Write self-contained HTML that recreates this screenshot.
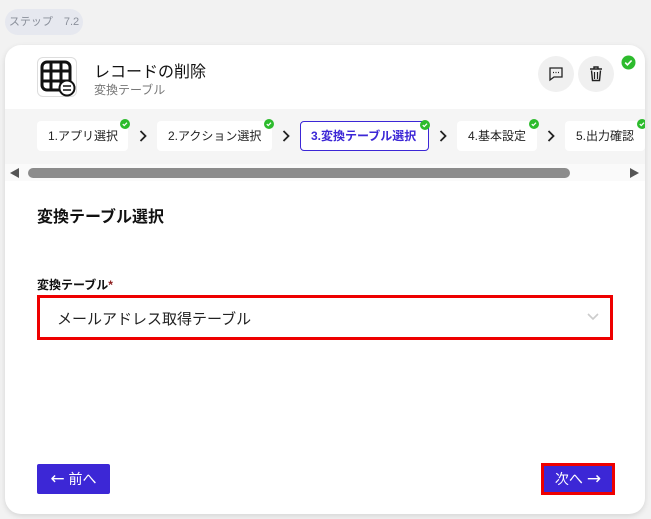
<!DOCTYPE html>
<html><head><meta charset="utf-8"><style>
*{box-sizing:border-box;margin:0;padding:0}
body{width:651px;height:519px;background:#f2f2f2;font-family:"Liberation Sans","Noto Sans CJK JP",sans-serif;position:relative;overflow:hidden;color:#111}
.abs{position:absolute}
.badge{left:5px;top:9px;width:78px;height:26px;border-radius:13px;background:#e6e8ef;color:#8a8f9a;font-size:11px;line-height:26px;text-align:center}
.card{left:5px;top:45px;width:640px;height:469px;background:#fff;border-radius:16px;box-shadow:0 2px 6px rgba(0,0,0,.12);overflow:hidden}
.circ{width:36px;height:36px;border-radius:50%;background:#f0f0f0;display:flex;align-items:center;justify-content:center}
.steps{left:0;top:64px;width:640px;height:55px;background:#f5f5f5}
.step{position:absolute;top:12px;height:30px;background:#fff;border-radius:4px;font-size:12px;line-height:30px;padding-left:11px;color:#222}
.step .ck{position:absolute;right:-2px;top:-2px}
.chev{position:absolute;top:21px}
.btn{background:#3c27d6;color:#fff;font-size:14px;text-align:center;border-radius:2px}
.ar{font-size:17px;font-family:"DejaVu Sans",sans-serif}
</style></head><body>
<div class="abs badge">ステップ　7.2</div>
<div class="abs card">
  <div class="abs" style="left:32px;top:12px;width:40px;height:40px;border:1px solid #ddd;border-radius:6px;background:#fff">
    <svg width="40" height="40" viewBox="0 0 40 40" style="position:absolute;left:-1px;top:-1px">
      <rect x="5" y="5" width="28" height="28" rx="5" fill="none" stroke="#111" stroke-width="3"/>
      <path d="M14 5V33M24 5V33M5 14H33M5 24H33" stroke="#111" stroke-width="3"/>
      <circle cx="30" cy="31" r="7.5" fill="#fff" stroke="#111" stroke-width="2"/>
      <path d="M26 29h8M26 33h8" stroke="#111" stroke-width="1.5"/>
    </svg>
  </div>
  <div class="abs" style="left:89px;top:13px;font-size:16px;color:#111">レコードの削除</div>
  <div class="abs" style="left:89px;top:36px;font-size:12px;color:#777">変換テーブル</div>
  <div class="abs circ" style="left:533px;top:11px"><svg width="16" height="16" viewBox="0 0 16 16"><path d="M2 2h12v9H6l-4 3z" fill="none" stroke="#222" stroke-width="1.3"/><path d="M5 6.5h1M7.5 6.5h1M10 6.5h1" stroke="#222" stroke-width="1.3"/></svg></div>
  <div class="abs circ" style="left:573px;top:11px"><svg width="14" height="16" viewBox="0 0 14 16"><path d="M1 3h12M5 3V1h4v2M2.5 4.5l1 10h7l1-10" fill="none" stroke="#222" stroke-width="1.4"/><path d="M5.5 6v7M8.5 6v7" stroke="#222" stroke-width="1.2"/></svg></div>
  <svg class="abs" style="left:616px;top:10px" width="15" height="15" viewBox="0 0 15 15"><circle cx="7.5" cy="7.5" r="7" fill="#2dbb2d"/><path d="M4.2 7.6l2.2 2.2 4.2-4.3" fill="none" stroke="#fff" stroke-width="1.6"/></svg>
  <div class="abs steps">
    <div class="step" style="left:32px;width:91px">1.アプリ選択<svg class="ck" width="10" height="10" viewBox="0 0 9 9"><circle cx="4.5" cy="4.5" r="4.5" fill="#2dbb2d"/><path d="M2.5 4.6l1.3 1.3 2.5-2.6" fill="none" stroke="#fff" stroke-width="1.1"/></svg></div>
    <svg class="chev" style="left:134px" width="8" height="12"><path d="M1.5 1l5 5-5 5" fill="none" stroke="#222" stroke-width="1.8"/></svg>
    <div class="step" style="left:152px;width:115px">2.アクション選択<svg class="ck" width="10" height="10" viewBox="0 0 9 9"><circle cx="4.5" cy="4.5" r="4.5" fill="#2dbb2d"/><path d="M2.5 4.6l1.3 1.3 2.5-2.6" fill="none" stroke="#fff" stroke-width="1.1"/></svg></div>
    <svg class="chev" style="left:277px" width="8" height="12"><path d="M1.5 1l5 5-5 5" fill="none" stroke="#222" stroke-width="1.8"/></svg>
    <div class="step" style="left:295px;width:129px;border:1px solid #3c27d6;color:#3c27d6;font-weight:bold;line-height:28px;padding-left:10px">3.変換テーブル選択<svg class="ck" width="10" height="10" viewBox="0 0 9 9"><circle cx="4.5" cy="4.5" r="4.5" fill="#2dbb2d"/><path d="M2.5 4.6l1.3 1.3 2.5-2.6" fill="none" stroke="#fff" stroke-width="1.1"/></svg></div>
    <svg class="chev" style="left:434px" width="8" height="12"><path d="M1.5 1l5 5-5 5" fill="none" stroke="#222" stroke-width="1.8"/></svg>
    <div class="step" style="left:452px;width:80px">4.基本設定<svg class="ck" width="10" height="10" viewBox="0 0 9 9"><circle cx="4.5" cy="4.5" r="4.5" fill="#2dbb2d"/><path d="M2.5 4.6l1.3 1.3 2.5-2.6" fill="none" stroke="#fff" stroke-width="1.1"/></svg></div>
    <svg class="chev" style="left:542px" width="8" height="12"><path d="M1.5 1l5 5-5 5" fill="none" stroke="#222" stroke-width="1.8"/></svg>
    <div class="step" style="left:560px;width:80px">5.出力確認<svg class="ck" width="10" height="10" viewBox="0 0 9 9"><circle cx="4.5" cy="4.5" r="4.5" fill="#2dbb2d"/><path d="M2.5 4.6l1.3 1.3 2.5-2.6" fill="none" stroke="#fff" stroke-width="1.1"/></svg></div>
  </div>
  <div class="abs" style="left:0;top:119px;width:640px;height:17px;background:#fafafa"></div>
  <svg class="abs" style="left:5px;top:123px" width="9" height="10"><path d="M9 0V10L0 5z" fill="#555"/></svg>
  <div class="abs" style="left:23px;top:123px;width:542px;height:10px;border-radius:5px;background:#8c8c8c"></div>
  <svg class="abs" style="left:625px;top:123px" width="9" height="10"><path d="M0 0V10L9 5z" fill="#555"/></svg>
  <div class="abs" style="left:32px;top:158px;font-size:16px;font-weight:bold">変換テーブル選択</div>
  <div class="abs" style="left:32px;top:231px;font-size:12px;font-weight:bold">変換テーブル<span style="color:#8b1a1a">*</span></div>
  <div class="abs" style="left:32px;top:250px;width:576px;height:45px;border:3px solid #ee0000;background:#fff">
    <div class="abs" style="left:17px;top:10px;font-size:15px;color:#222">メールアドレス取得テーブル</div>
    <svg class="abs" style="left:547px;top:15px" width="12" height="8"><path d="M1 1l5 5 5-5" fill="none" stroke="#ccc" stroke-width="1.6"/></svg>
  </div>
  <div class="abs btn" style="left:32px;top:419px;width:73px;height:30px;line-height:30px"><span class="ar">←</span> 前へ</div>
  <div class="abs btn" style="left:536px;top:418px;width:74px;height:32px;line-height:26px;border:3px solid #ee0000;border-radius:0">次へ <span class="ar">→</span></div>
</div>
</body></html>
